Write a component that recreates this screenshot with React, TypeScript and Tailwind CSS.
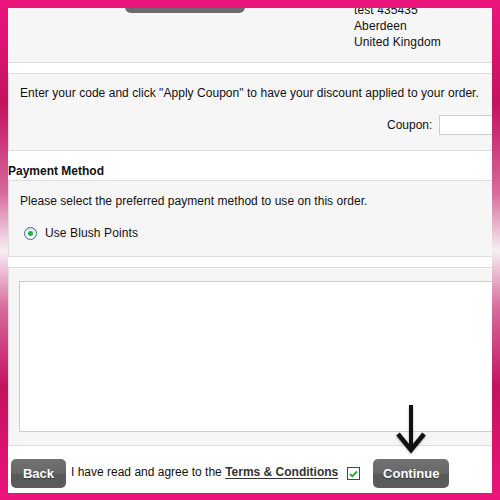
import React from "react";

const PINK = "bg-[#ec157b]";

function Radio() {
	return (
		<span className="flex h-[13px] w-[13px] items-center justify-center rounded-full border border-[#3d6a92] bg-[linear-gradient(#dfe3e8,#ffffff)]">
			<span className="h-[5px] w-[5px] rounded-full bg-[#21b33a]" />
		</span>
	);
}

function Check() {
	return (
		<span className="flex h-[13px] w-[13px] items-center justify-center border border-[#1c5180] bg-white">
			<svg width="9" height="8" viewBox="0 0 9 8">
				<path d="M1 4 L3.3 6.3 L8 1.5" fill="none" stroke="#21a321" strokeWidth="1.8" />
			</svg>
		</span>
	);
}

function GreyButton({ children, width }: { children: React.ReactNode; width: string }) {
	return (
		<button
			className={`${width} h-[29px] rounded-[5px] bg-[linear-gradient(#727272,#676767_50%,#595959_52%,#5c5c5c)] text-[13px] font-bold text-white [text-shadow:0_1px_1px_rgba(0,0,0,0.4)]`}
		>
			{children}
		</button>
	);
}

function Arrow() {
	return (
		<svg width="34" height="50" viewBox="0 0 34 50" className="drop-shadow-[0_1px_1px_rgba(0,0,0,0.35)]">
			<path d="M17 1 L17 44" stroke="#111" strokeWidth="4" />
			<path d="M4 30 L17 46 L30 30" fill="none" stroke="#111" strokeWidth="4.5" strokeLinejoin="miter" />
		</svg>
	);
}

export default function App() {
	return (
		<div className="flex h-[500px] w-[500px] flex-col font-['Liberation_Sans',Arial,sans-serif] text-[12px] text-[#111]">
			<div className={`h-2 shrink-0 ${PINK}`} />
			<div className="flex flex-1 bg-[linear-gradient(to_bottom,#e9147a_0%,#c3135f_20%,#d76a9c_38%,#f6eef3_50%,#d76a9c_62%,#c3135f_78%,#e9147a_100%)]">
				<div className="w-2 shrink-0" />
				<div className="flex-1 overflow-hidden bg-white">
					<div className="w-[540px]">
						{/* address panel */}
						<div className="flex h-[55px] border-b border-[#dddddd] bg-[#f6f6f6]">
							<div className="-mt-[25px] ml-[117px] h-[30px] w-[120px] shrink-0 rounded-[6px] bg-[#6b6b6b]" />
							<div className="-mt-[6px] ml-[109px] leading-4 tracking-[0.1px]">
								<div>test 435435</div>
								<div>Aberdeen</div>
								<div>United Kingdom</div>
							</div>
						</div>

						{/* coupon */}
						<div className="mt-[10px] h-[78px] border border-[#dddddd] bg-[#f6f6f6] pl-[11px] pt-[11px]">
							<div className="leading-4 tracking-[0.04px]">Enter your code and click "Apply Coupon" to have your discount applied to your order.</div>
							<div className="mt-[14px] flex items-center">
								<span className="ml-[367px] leading-4">Coupon:</span>
								<input className="ml-[7px] h-[20px] w-[100px] border border-[#cccccc] bg-white outline-none" />
							</div>
						</div>

						<div className="h-[29px] pt-[12px] font-bold leading-4">Payment Method</div>

						{/* payment */}
						<div className="h-[77px] border border-[#dddddd] bg-[#f6f6f6] pl-[11px] pt-[12px]">
							<div className="leading-4 tracking-[0.04px]">Please select the preferred payment method to use on this order.</div>
							<label className="ml-[4px] mt-[16px] flex items-center gap-[8px]">
								<Radio />
								<span className="leading-4 tracking-[0.1px]">Use Blush Points</span>
							</label>
						</div>

						{/* comments */}
						<div className="mt-[10px] h-[179px] border border-[#dddddd] bg-[#f6f6f6] pl-[10px] pt-[13px]">
							<div className="h-[151px] w-[520px] border border-[#cccccc] bg-white" />
						</div>

						{/* footer */}
						<div className="flex h-[47px] items-end pb-[5px] pl-[3px]">
							<GreyButton width="w-[55px]">Back</GreyButton>
							<span className="mb-[8px] ml-[5px] leading-4">
								I have read and agree to the{" "}
								<span className="font-bold text-[#333] underline underline-offset-2">Terms &amp; Conditions</span>
							</span>
							<span className="mb-[8px] ml-[9px]">
								<Check />
							</span>
							<div className="ml-[13px] flex flex-col items-center gap-[5px]">
								<Arrow />
								<GreyButton width="w-[76px]">Continue</GreyButton>
							</div>
						</div>
					</div>
				</div>
				<div className="w-2 shrink-0" />
			</div>
			<div className={`h-2 shrink-0 ${PINK}`} />
		</div>
	);
}
